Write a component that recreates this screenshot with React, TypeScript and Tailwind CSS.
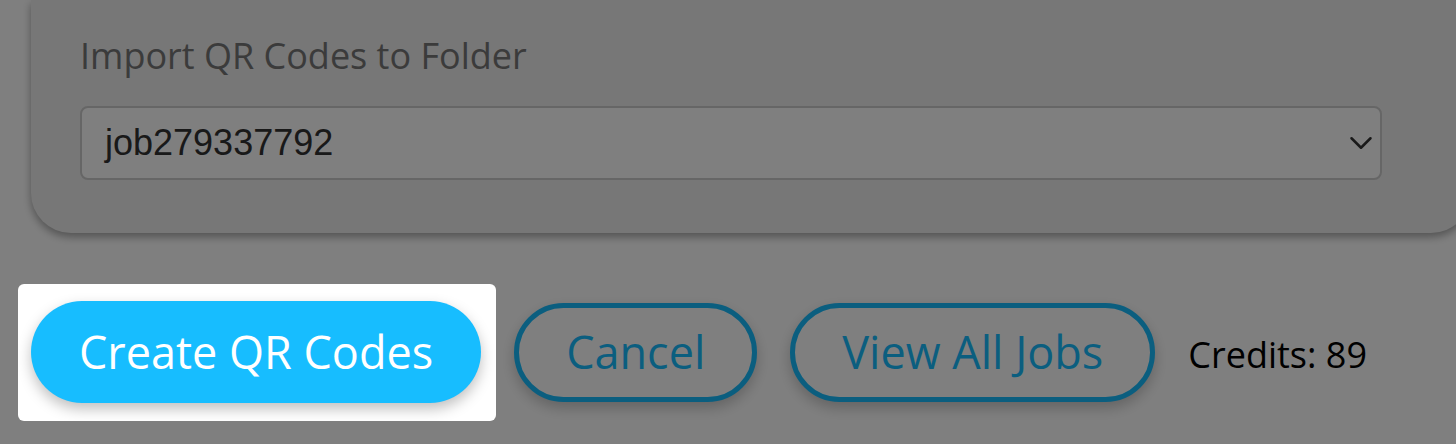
import { ChevronDown } from "lucide-react";

const OutlineButton = ({ label }: { label: string }) => (
  <button className="flex h-[99px] items-center rounded-full border-[5px] border-[#17bdff] bg-white px-[47px] text-[45px] text-[#17bdff] shadow-[0_6px_14px_rgba(0,0,0,0.22)]">
    {label}
  </button>
);

export default function App() {
  return (
    <div className="relative h-[444px] w-full overflow-hidden bg-white font-['Open_Sans',sans-serif]">
      {/* Import card */}
      <div className="ml-[31px] w-[1440px] rounded-b-[40px] bg-[#eeeeee] pb-[53px] pl-[49px] pt-[34px] shadow-[0_4px_8px_rgba(0,0,0,0.35)]">
        <label className="mb-[29px] block text-[36px] leading-[1.2] text-[#777777]">
          Import QR Codes to Folder
        </label>
        <div className="flex h-[74px] w-[1302px] items-center justify-between rounded-[8px] border-2 border-[#cccccc] bg-white pl-[23px] pr-[0px] font-['Liberation_Sans',Arial,sans-serif] text-[36px] text-[#333333]">
          <span>job279337792</span>
          <ChevronDown size={38} strokeWidth={1.6} className="text-[#333333]" />
        </div>
      </div>

      {/* Actions */}
      <div className="mt-[68px] flex items-center gap-[33px] pl-[31px]">
        <div className="relative">
          <button className="flex h-[102px] items-center rounded-full bg-[#17bdff] px-[48px] text-[45px] text-white shadow-[0_6px_14px_rgba(0,0,0,0.25)]">
            Create QR Codes
          </button>
          {/* tour spotlight */}
          <div className="pointer-events-none absolute -bottom-[18px] -left-[13px] -right-[15px] -top-[17px] z-10 rounded-[6px] shadow-[0_0_0_9999px_rgba(0,0,0,0.5)]" />
        </div>
        <OutlineButton label="Cancel" />
        <OutlineButton label="View All Jobs" />
        <span className="pt-[6px] text-[36px] text-black">Credits: 89</span>
      </div>
    </div>
  );
}
